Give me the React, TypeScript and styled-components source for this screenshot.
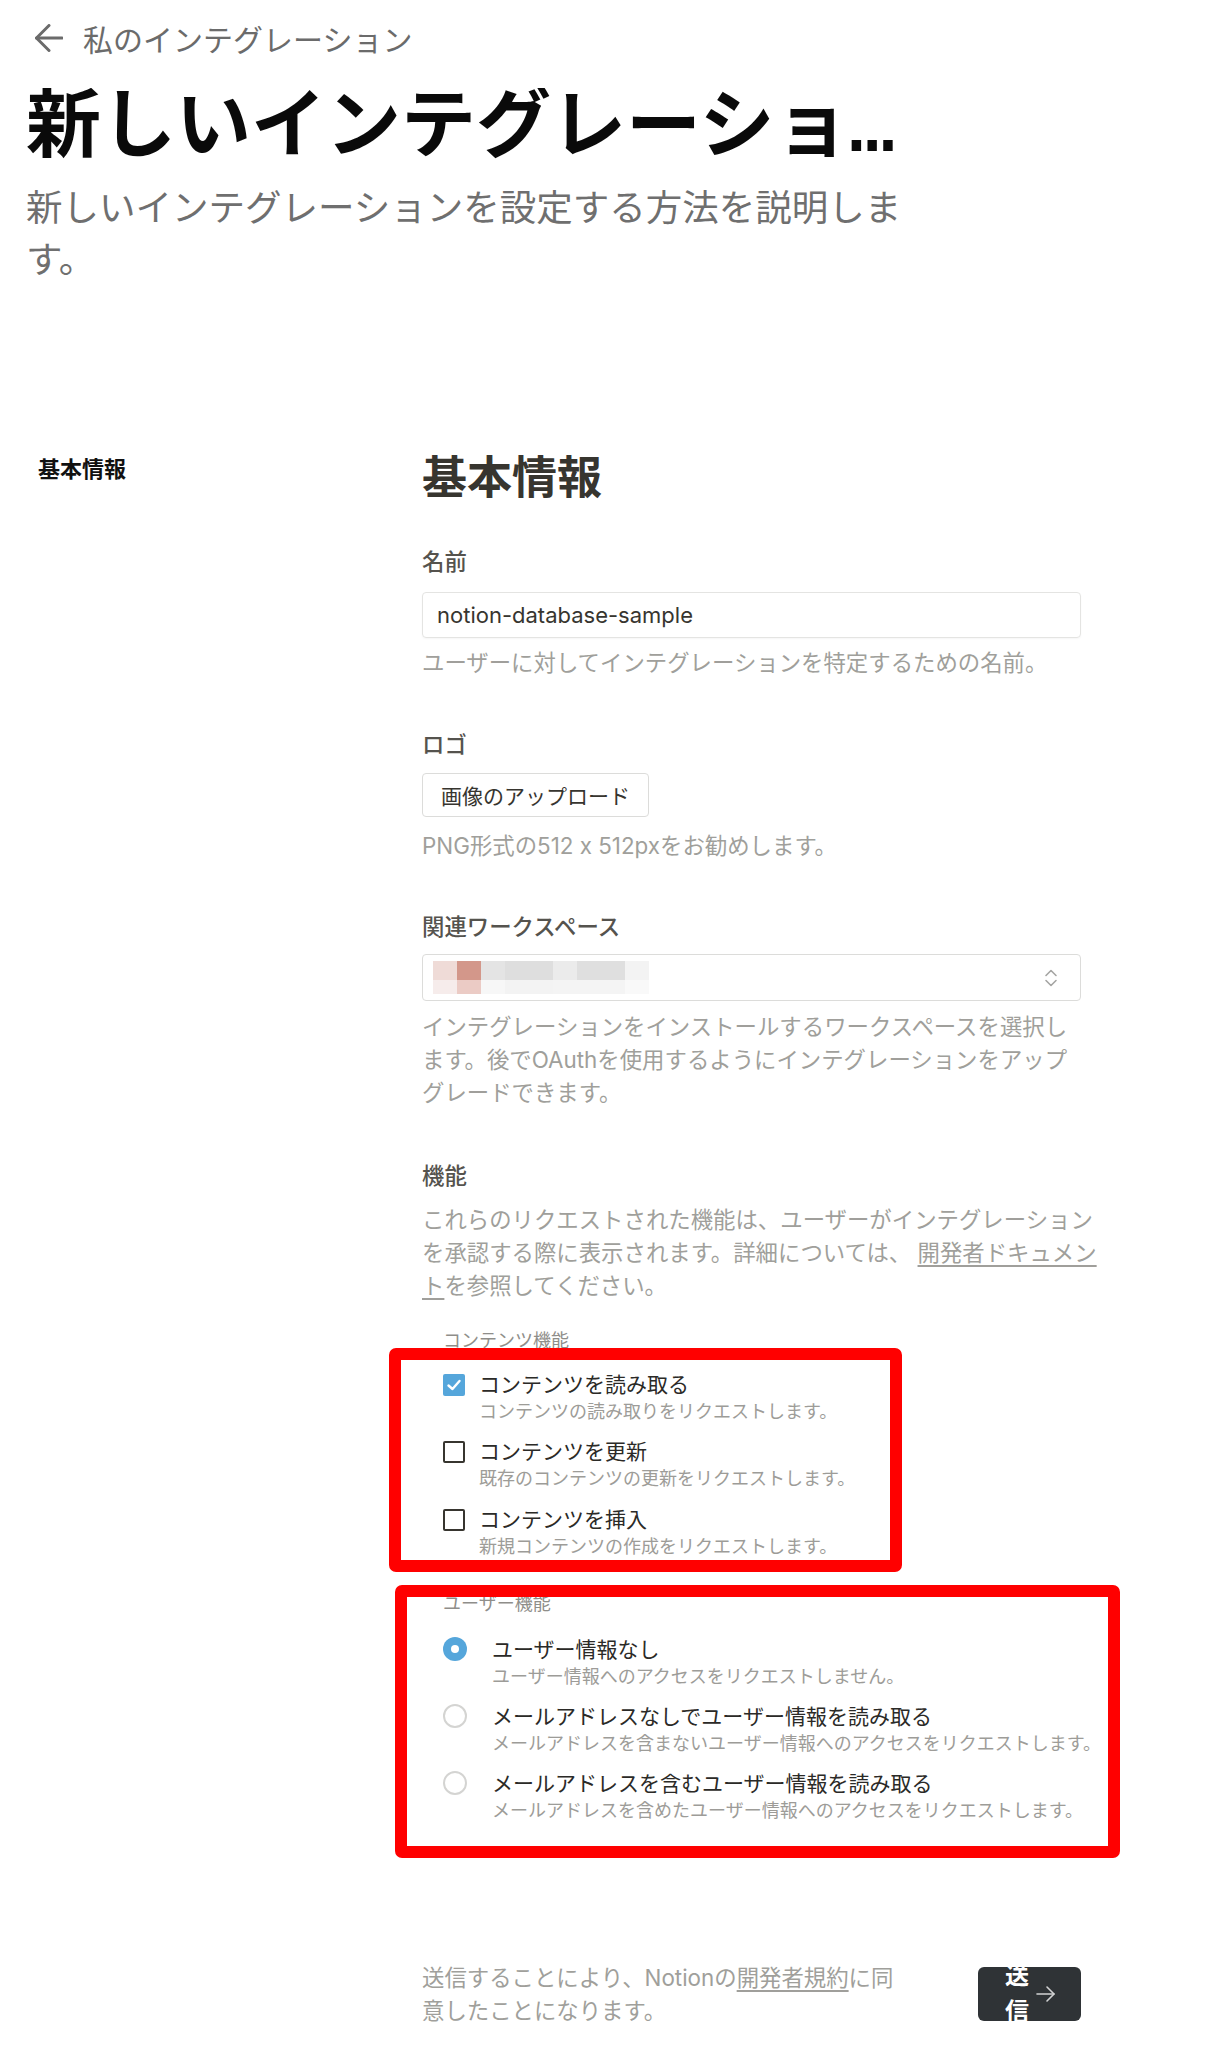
import React from "react";
import styled, { createGlobalStyle } from "styled-components";

const GlobalStyle = createGlobalStyle`
  html, body {
    margin: 0;
    padding: 0;
    background: #ffffff;
  }
  body {
    font-family: "Inter", "Noto Sans CJK JP", sans-serif;
    color: #37352f;
  }
  * {
    box-sizing: border-box;
  }
`;

const Page = styled.div`
  width: 1218px;
  min-height: 2060px;
  padding: 16px 0 34px 26px;
`;

const BackLink = styled.a`
  display: flex;
  align-items: center;
  gap: 20px;
  height: 44px;
  color: #6b6b6b;
  font-size: 30px;
  text-decoration: none;
  svg {
    margin-left: 9px;
  }
`;

// mono first so the ellipsis glyph stays narrow; the kana/kanji come from Noto CJK
const Title = styled.h1`
  margin: 28px 0 0;
  width: 890px;
  font-family: "Liberation Mono", "Noto Sans CJK JP", sans-serif;
  font-size: 75px;
  line-height: 88px;
  font-weight: 700;
  color: #0a0a0a;
  white-space: nowrap;
  overflow: hidden;
  text-overflow: ellipsis;
`;

const Subtitle = styled.p`
  margin: 6px 0 0;
  width: 890px;
  font-size: 36.5px;
  line-height: 52px;
  color: #6f6f6f;
`;

const Body = styled.div`
  margin-top: 163px;
  display: grid;
  grid-template-columns: 396px 700px;
`;

const Sidebar = styled.nav`
  padding: 4px 0 0 12px;
  font-size: 22px;
  line-height: 33px;
  font-weight: 700;
  color: #111;
`;

const Main = styled.main`
  display: flex;
  flex-direction: column;
`;

const SectionHeading = styled.h2`
  margin: 0;
  font-size: 45px;
  line-height: 58px;
  font-weight: 700;
  color: #37352f;
`;

const Field = styled.section<{ $gap: number }>`
  margin-top: ${(p) => p.$gap}px;
  display: flex;
  flex-direction: column;
  align-items: flex-start;
`;

const Label = styled.div`
  font-size: 22.4px;
  line-height: 33px;
  font-weight: 500;
  color: #55534e;
`;

const TextInput = styled.div`
  margin-top: 14px;
  width: 659px;
  height: 46px;
  display: flex;
  align-items: center;
  padding: 0 14px;
  border: 1px solid #e4e4e2;
  border-radius: 4px;
  box-shadow: 0 1px 2px rgba(15, 15, 15, 0.04);
  font-size: 22px;
  color: #37352f;
`;

const UploadButton = styled.button`
  margin-top: 12px;
  height: 44px;
  padding: 0 18px;
  border: 1px solid #dcdcda;
  border-radius: 4px;
  background: #fff;
  font-family: inherit;
  font-size: 21px;
  color: #37352f;
`;

const Select = styled.div`
  margin-top: 11.5px;
  width: 659px;
  height: 47px;
  display: flex;
  align-items: center;
  justify-content: space-between;
  padding: 0 22px 0 10px;
  border: 1px solid #dcdcda;
  border-radius: 4px;
`;

const Help = styled.p<{ $gap: number; $w: number }>`
  margin: ${(p) => p.$gap}px 0 0;
  width: ${(p) => p.$w}px;
  font-size: 22.4px;
  line-height: 33px;
  color: #a09f9b;
  a {
    color: inherit;
    text-decoration: underline;
    text-underline-offset: 4px;
  }
`;

const CapGroup = styled.div<{ $gap: number }>`
  position: relative;
  margin-top: ${(p) => p.$gap}px;
  padding-left: 21px;
`;

const GroupLabel = styled.div`
  font-size: 18px;
  line-height: 27px;
  color: #8f8e8a;
`;

const Options = styled.div<{ $gap: number; $first: number }>`
  margin-top: ${(p) => p.$first}px;
  display: flex;
  flex-direction: column;
  gap: ${(p) => p.$gap}px;
`;

const OptionRow = styled.label<{ $space: number }>`
  display: grid;
  grid-template-columns: auto 1fr;
  column-gap: ${(p) => p.$space}px;
  align-items: start;
`;

const Checkbox = styled.span<{ $on?: boolean }>`
  width: 22px;
  height: 22px;
  margin-top: 3px;
  display: flex;
  align-items: center;
  justify-content: center;
  border-radius: 2px;
  background: ${(p) => (p.$on ? "#55a6db" : "#fff")};
  border: ${(p) => (p.$on ? "none" : "2.5px solid #37352f")};
`;

const Radio = styled.span<{ $on?: boolean }>`
  width: 24px;
  height: 24px;
  margin-top: 1.5px;
  border-radius: 50%;
  background: ${(p) => (p.$on ? "#55a6db" : "#fff")};
  border: ${(p) => (p.$on ? "none" : "2px solid #d4d4d2")};
  display: flex;
  align-items: center;
  justify-content: center;
  &::after {
    content: "";
    display: ${(p) => (p.$on ? "block" : "none")};
    width: 8px;
    height: 8px;
    border-radius: 50%;
    background: #fff;
  }
`;

const OptionText = styled.div`
  display: flex;
  flex-direction: column;
`;

const OptionTitle = styled.span`
  font-size: 21px;
  line-height: 27px;
  color: #2b2a27;
`;

const OptionHint = styled.span`
  font-size: 18px;
  line-height: 27px;
  color: #9d9c98;
`;

const Marker = styled.div<{ $x: number; $y: number; $w: number; $h: number }>`
  position: absolute;
  left: ${(p) => p.$x}px;
  top: ${(p) => p.$y}px;
  width: ${(p) => p.$w}px;
  height: ${(p) => p.$h}px;
  border: 12px solid #ff0000;
  border-radius: 7px;
  pointer-events: none;
`;

const Footer = styled.footer`
  margin-top: 137px;
  width: 659px;
  display: flex;
  align-items: center;
  justify-content: space-between;
`;

const Terms = styled.p`
  margin: 0;
  width: 482px;
  font-size: 22.4px;
  line-height: 33px;
  color: #a09f9b;
  a {
    color: inherit;
    text-decoration: underline;
    text-underline-offset: 4px;
  }
`;

const Submit = styled.button`
  width: 103px;
  height: 54px;
  padding: 0 25px 0 27px;
  border: 0;
  border-radius: 6px;
  background: #2f3336;
  color: #fff;
  display: flex;
  align-items: center;
  justify-content: flex-start;
  gap: 7px;
  overflow: hidden;
  font-family: inherit;
  font-size: 24px;
  line-height: 36px;
  font-weight: 700;
`;

const SubmitLabel = styled.span`
  min-width: 0;
  flex: 0 1 auto;
  text-align: left;
`;

const BackArrow = () => (
  <svg width="28" height="28" viewBox="0 0 28 28" fill="none" stroke="#6b6b6b" strokeWidth="3" strokeLinecap="round" strokeLinejoin="round">
    <polyline points="14,1.5 1.5,14 14,26.5" />
    <line x1="1.5" y1="14" x2="27" y2="14" />
  </svg>
);

const Check = () => (
  <svg width="16" height="16" viewBox="0 0 16 16" fill="none" stroke="#fff" strokeWidth="2.4" strokeLinecap="round" strokeLinejoin="round">
    <polyline points="2.5,8.5 6.5,12 13.5,4" />
  </svg>
);

const UpDown = () => (
  <svg width="14" height="18" viewBox="0 0 14 18" fill="none" stroke="#a5a5a3" strokeWidth="1.6" strokeLinecap="round" strokeLinejoin="round">
    <polyline points="2,6.5 7,1.5 12,6.5" />
    <polyline points="2,11.5 7,16.5 12,11.5" />
  </svg>
);

const ArrowRight = () => (
  <svg width="20" height="18" viewBox="0 0 20 18" fill="none" stroke="#d2d3d4" strokeWidth="1.6" strokeLinecap="round" strokeLinejoin="round" style={{ flex: "none" }}>
    <line x1="1" y1="9" x2="18" y2="9" />
    <polyline points="11,2 18,9 11,16" />
  </svg>
);

// blurred workspace name (pixelated in the screenshot)
const mosaic = [
  ["#efdbd7", "#f6eceb"],
  ["#d3978a", "#ebcbc5"],
  ["#e4e4e4", "#f7f7f7"],
  ["#dedede", "#f3f3f3"],
  ["#dedede", "#f3f3f3"],
  ["#ebebeb", "#f4f4f4"],
  ["#dfdfdf", "#f4f4f4"],
  ["#dfdfdf", "#f4f4f4"],
  ["#f3f3f3", "#f9f9f9"],
];

const WorkspaceBlur = () => (
  <svg width="216" height="33" viewBox="0 0 216 33">
    {mosaic.map(([top, bottom], i) => (
      <g key={i}>
        <rect x={i * 24} y="0" width="24" height="19" fill={top} />
        <rect x={i * 24} y="19" width="24" height="14" fill={bottom} />
      </g>
    ))}
  </svg>
);

const contentCaps = [
  { title: "コンテンツを読み取る", hint: "コンテンツの読み取りをリクエストします。", on: true },
  { title: "コンテンツを更新", hint: "既存のコンテンツの更新をリクエストします。", on: false },
  { title: "コンテンツを挿入", hint: "新規コンテンツの作成をリクエストします。", on: false },
];

const userCaps = [
  { title: "ユーザー情報なし", hint: "ユーザー情報へのアクセスをリクエストしません。", on: true },
  { title: "メールアドレスなしでユーザー情報を読み取る", hint: "メールアドレスを含まないユーザー情報へのアクセスをリクエストします。", on: false },
  { title: "メールアドレスを含むユーザー情報を読み取る", hint: "メールアドレスを含めたユーザー情報へのアクセスをリクエストします。", on: false },
];

export default function App() {
  return (
    <>
      <GlobalStyle />
      <Page>
        <header>
          <BackLink href="#">
            <BackArrow />
            私のインテグレーション
          </BackLink>
          <Title>新しいインテグレーション</Title>
          <Subtitle>新しいインテグレーションを設定する方法を説明します。</Subtitle>
        </header>

        <Body>
          <Sidebar>基本情報</Sidebar>
          <Main>
            <SectionHeading>基本情報</SectionHeading>

            <Field $gap={38}>
              <Label>名前</Label>
              <TextInput>notion-database-sample</TextInput>
              <Help $gap={8} $w={659}>ユーザーに対してインテグレーションを特定するための名前。</Help>
            </Field>

            <Field $gap={49}>
              <Label>ロゴ</Label>
              <UploadButton>画像のアップロード</UploadButton>
              <Help $gap={11.5} $w={659}>PNG形式の512 x 512pxをお勧めします。</Help>
            </Field>

            <Field $gap={48}>
              <Label>関連ワークスペース</Label>
              <Select>
                <WorkspaceBlur />
                <UpDown />
              </Select>
              <Help $gap={8.5} $w={659}>
                インテグレーションをインストールするワークスペースを選択します。後でOAuthを使用するようにインテグレーションをアップグレードできます。
              </Help>
            </Field>

            <Field $gap={50}>
              <Label>機能</Label>
              <Help $gap={11} $w={686}>
                これらのリクエストされた機能は、ユーザーがインテグレーションを承認する際に表示されます。詳細については、 <a href="#">開発者ドキュメント</a>を参照してください。
              </Help>
            </Field>

            <CapGroup $gap={25}>
              <GroupLabel>コンテンツ機能</GroupLabel>
              <Options $first={17} $gap={13.5}>
                {contentCaps.map((c) => (
                  <OptionRow key={c.title} $space={14}>
                    <Checkbox $on={c.on}>{c.on && <Check />}</Checkbox>
                    <OptionText>
                      <OptionTitle>{c.title}</OptionTitle>
                      <OptionHint>{c.hint}</OptionHint>
                    </OptionText>
                  </OptionRow>
                ))}
              </Options>
              <Marker $x={-33} $y={21.5} $w={513} $h={224} />
            </CapGroup>

            <CapGroup $gap={30}>
              <GroupLabel>ユーザー機能</GroupLabel>
              <Options $first={19} $gap={13}>
                {userCaps.map((c) => (
                  <OptionRow key={c.title} $space={25}>
                    <Radio $on={c.on} />
                    <OptionText>
                      <OptionTitle>{c.title}</OptionTitle>
                      <OptionHint>{c.hint}</OptionHint>
                    </OptionText>
                  </OptionRow>
                ))}
              </Options>
              <Marker $x={-27} $y={-4.5} $w={725} $h={273} />
            </CapGroup>

            <Footer>
              <Terms>
                送信することにより、Notionの<a href="#">開発者規約</a>に同意したことになります。
              </Terms>
              <Submit>
                <SubmitLabel>送信</SubmitLabel>
                <ArrowRight />
              </Submit>
            </Footer>
          </Main>
        </Body>
      </Page>
    </>
  );
}
